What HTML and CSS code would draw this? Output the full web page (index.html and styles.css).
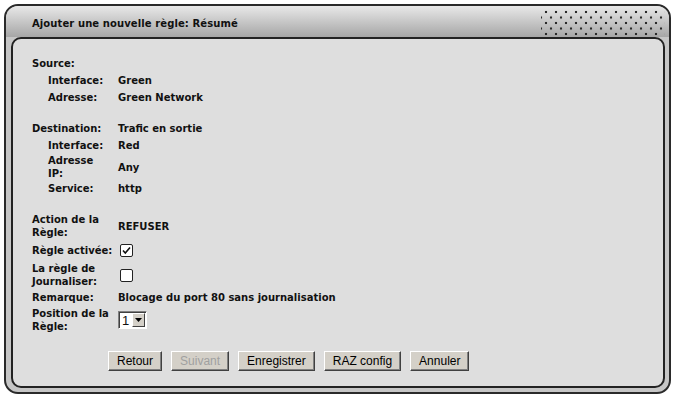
FILE: index.html
```html
<!DOCTYPE html>
<html lang="fr">
<head>
    <meta charset="UTF-8">
    <title>Ajouter une nouvelle règle: Résumé</title>
    <link rel="stylesheet" href="styles.css">
</head>
<body>
    <div class="frame">
        <div class="head">
            <span class="title">Ajouter une nouvelle règle: Résumé</span>
            <span class="dots"></span>
        </div>
        <div class="panel">
            <div class="row"><span class="lbl">Source:</span></div>
            <div class="row"><span class="lbl sub">Interface:</span><span>Green</span></div>
            <div class="row"><span class="lbl sub">Adresse:</span><span>Green Network</span></div>
            <div class="spacer"></div>
            <div class="row"><span class="lbl">Destination:</span><span>Trafic en sortie</span></div>
            <div class="row"><span class="lbl sub">Interface:</span><span>Red</span></div>
            <div class="row"><span class="lbl sub">Adresse<br>IP:</span><span>Any</span></div>
            <div class="row"><span class="lbl sub">Service:</span><span>http</span></div>
            <div class="spacer big"></div>
            <div class="row tall"><span class="lbl">Action de la<br>Règle:</span><span>REFUSER</span></div>
            <div class="row tall"><span class="lbl">Règle activée:</span>
                <span class="check">
                    <svg width="11" height="11" viewBox="0 0 11 11"><path d="M2 5.5 L4.3 8 L9 2.5" fill="none" stroke="#111" stroke-width="1.6"/></svg>
                </span>
            </div>
            <div class="row tall"><span class="lbl">La règle de<br>Journaliser:</span><span class="check"></span></div>
            <div class="row mid"><span class="lbl">Remarque:</span><span>Blocage du port 80 sans journalisation</span></div>
            <div class="row tall"><span class="lbl">Position de la<br>Règle:</span>
                <span class="select"><span class="val">1</span><span class="arrow"><svg width="7" height="4" viewBox="0 0 7 4"><path d="M0 0 H7 L3.5 4 Z" fill="#000"/></svg></span></span>
            </div>
            <div class="buttons">
                <button class="btn">Retour</button>
                <button class="btn" disabled>Suivant</button>
                <button class="btn">Enregistrer</button>
                <button class="btn">RAZ config</button>
                <button class="btn">Annuler</button>
            </div>
        </div>
    </div>
</body>
</html>
```

FILE: styles.css
```css
body {
    margin: 0;
    background-color: #fff;
    font-family: "DejaVu Sans", Verdana, sans-serif;
    font-size: 10px;
    font-weight: bold;
    color: #111;
}
.frame {
    margin: 4px;
    width: 667px;
    height: 390px;
    box-sizing: border-box;
    border: 2px solid #2a2a2a;
    border-radius: 14px;
    background-color: #c6c6c6;
    overflow: hidden;
    display: flex;
    flex-direction: column;
}
.head {
    height: 31px;
    flex: none;
    display: flex;
    align-items: center;
    padding: 4px 4px 0 26px;
    box-sizing: border-box;
    background: linear-gradient(#e8e8e8, #a6a6a6);
}
.title {
    flex: 1;
    letter-spacing: 0.1px;
}
.dots {
    width: 124px;
    height: 27px;
    margin-top: -3px;
    background-image:
        radial-gradient(circle at 5px 3px, #2a2a2a 1.1px, transparent 1.6px),
        radial-gradient(circle at 5px 3px, #2a2a2a 1.1px, transparent 1.6px);
    background-size: 10px 11px;
    background-position: 0 0, 5px 5.5px;
}
.panel {
    flex: 1;
    margin: 0 4px 4px 5px;
    border: 2px solid #222;
    border-radius: 10px;
    background-color: #dedede;
    padding: 16px 0 0 19px;
}
.row {
    display: flex;
    align-items: center;
    min-height: 17px;
    line-height: 13px;
}
.row.tall {
    min-height: 23px;
}
.row.mid {
    min-height: 19px;
}
.lbl {
    width: 86px;
    flex: none;
}
.lbl.sub {
    width: 70px;
    padding-left: 16px;
}
.spacer {
    height: 14px;
}
.spacer.big {
    height: 16px;
}
.check {
    width: 11px;
    height: 11px;
    margin-left: 2px;
    border: 1px solid #222;
    border-radius: 2px;
    background-color: #fff;
    display: flex;
}
.select {
    display: flex;
    height: 18px;
    width: 29px;
    box-sizing: border-box;
    border: 1px solid;
    border-color: #808080 #fff #fff #808080;
    box-shadow: inset 1px 1px #404040;
    background-color: #fff;
    font-family: "Liberation Sans", Arial, sans-serif;
    font-weight: normal;
    font-size: 13px;
}
.select .val {
    flex: 1;
    padding: 2px 0 0 3px;
}
.select .arrow {
    width: 13px;
    margin: 1px 1px 1px 0;
    background-color: #d4d0c8;
    box-sizing: border-box;
    border: 1px solid;
    border-color: #fff #404040 #404040 #fff;
    display: flex;
    align-items: center;
    justify-content: center;
}
.buttons {
    display: flex;
    gap: 9px;
    padding: 18px 0 0 76px;
}
.btn {
    height: 20px;
    padding: 0 8px;
    background-color: #d4d0c8;
    border: 1px solid;
    border-color: #fff #404040 #404040 #fff;
    box-shadow: inset -1px -1px #808080;
    font-family: "Liberation Sans", Arial, sans-serif;
    font-size: 12px;
    color: #000;
}
.btn:disabled {
    color: #a0a0a0;
}
```
